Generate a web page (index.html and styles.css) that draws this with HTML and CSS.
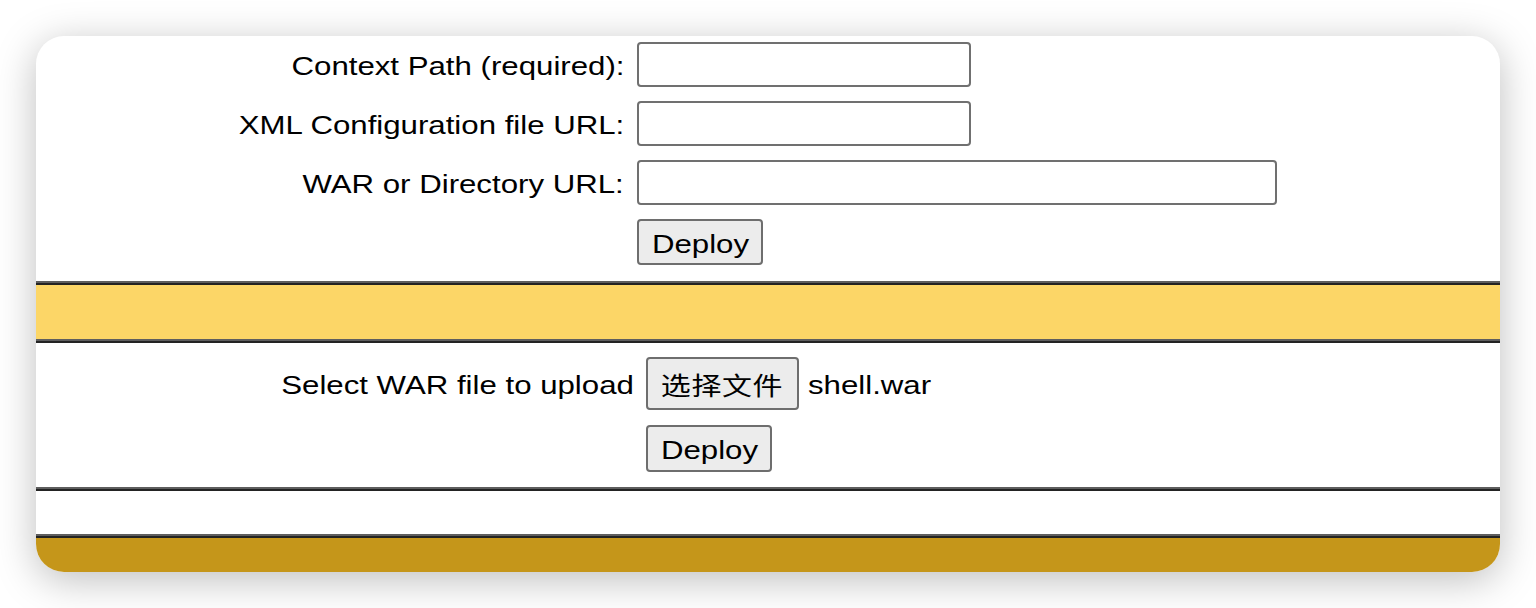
FILE: index.html
```html
<!DOCTYPE html>
<html lang="en">
<head>
<meta charset="utf-8">
<title>Deploy</title>
<link rel="stylesheet" href="styles.css">
</head>
<body>
<div class="window">
  <section class="deploy-dir">
    <div class="form-grid">
      <label class="lbl"><span class="wide">Context Path (required):</span></label>
      <input class="field field-short" type="text">
      <label class="lbl"><span class="wide">XML Configuration file URL:</span></label>
      <input class="field field-short" type="text">
      <label class="lbl"><span class="wide">WAR or Directory URL:</span></label>
      <input class="field field-long" type="text">
      <span class="spacer"></span>
      <div class="action"><button class="btn" type="button"><span class="wide-c">Deploy</span></button></div>
    </div>
  </section>
  <div class="rule"></div>
  <div class="band band-yellow"></div>
  <div class="rule"></div>
  <section class="upload">
    <div class="upload-grid">
      <span class="lbl lbl-upload"><span class="wide">Select WAR file to upload</span></span>
      <div class="picker">
        <button class="btn btn-file" type="button"><span class="wide-c">选择文件</span></button>
        <span class="filename"><span class="wide-l">shell.war</span></span>
      </div>
      <span class="spacer"></span>
      <div class="action-2"><button class="btn btn-tall" type="button"><span class="wide-c">Deploy</span></button></div>
    </div>
  </section>
  <div class="rule"></div>
  <div class="band band-white"></div>
  <div class="rule"></div>
  <div class="band band-gold"></div>
</div>
</body>
</html>
```

FILE: styles.css
```css
* { box-sizing: border-box; }

html, body {
  margin: 0;
  padding: 0;
  background: #ffffff;
}

body {
  font-family: "Liberation Sans", "Noto Sans CJK SC", sans-serif;
  color: #000;
  padding: 36px;
}

.window {
  width: 1464px;
  height: 536px;
  background: #fff;
  border-radius: 28px;
  overflow: hidden;
  box-shadow: 0 8px 40px rgba(0, 0, 0, 0.26);
  display: flex;
  flex-direction: column;
}

/* horizontally widened glyphs, as in the reference */
.wide,
.wide-c,
.wide-l {
  display: inline-block;
  transform: scaleX(1.2);
}
.wide { transform-origin: right center; }
.wide-c { transform-origin: center center; }
.wide-l { transform-origin: left center; }

.deploy-dir {
  padding: 6px 0 16px;
}

.form-grid {
  display: grid;
  grid-template-columns: 588px auto;
  grid-template-rows: 45px 45px 45px 46px;
  column-gap: 13px;
  row-gap: 14px;
  align-items: center;
}

.lbl {
  font-size: 26px;
  text-align: right;
  white-space: nowrap;
  padding-top: 4px;
}

.field {
  display: block;
  margin: 0;
  padding: 0 6px;
  height: 45px;
  background: #fff;
  border: 2px solid #707070;
  border-radius: 4px;
  font: inherit;
}

.field-short { width: 334px; }
.field-long { width: 640px; }

.action {
  align-self: end;
  height: 46px;
}

.btn {
  display: block;
  margin: 0;
  width: 126px;
  height: 46px;
  padding: 3px 0 0;
  background: #ececec;
  border: 2px solid #6e6e6e;
  border-radius: 4px;
  font-family: "Liberation Sans", "Noto Sans CJK SC", sans-serif;
  font-size: 26px;
  color: #000;
  line-height: 1;
  text-align: center;
}

.rule {
  flex: 0 0 auto;
  height: 4px;
  border-top: 2px solid #5e5e5e;
  border-bottom: 2px solid #232323;
}

.band { flex: 0 0 auto; }
.band-yellow { height: 54px; background: #fcd667; }
.band-white { height: 43px; background: #fff; }
.band-gold { flex: 1 1 auto; background: #c5961a; }

.upload {
  padding: 14px 0 15px;
}

.upload-grid {
  display: grid;
  grid-template-columns: 598px auto;
  grid-template-rows: 53px 47px;
  column-gap: 12px;
  row-gap: 15px;
  align-items: center;
}

.lbl-upload {
  padding-top: 4px;
}

.picker {
  display: flex;
  align-items: center;
  gap: 9px;
}

.btn-file {
  width: 153px;
  height: 53px;
  padding: 2px 0 0;
  font-family: "Noto Sans CJK SC", sans-serif;
  font-size: 25px;
  letter-spacing: 0.5px;
}

.filename {
  font-size: 26px;
  padding-top: 4px;
}

.btn-tall {
  height: 47px;
}
```
